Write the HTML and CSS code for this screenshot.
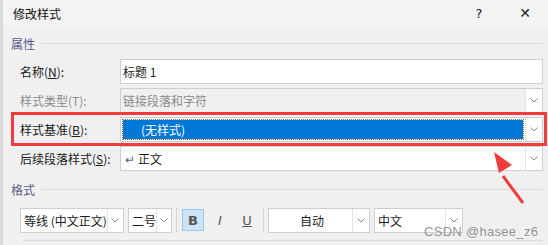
FILE: index.html
```html
<!DOCTYPE html>
<html lang="zh-CN">
<head>
    <meta charset="UTF-8">
    <title>修改样式</title>
    <link rel="stylesheet" href="styles.css">
</head>
<body>
    <div class="dialog">
        <div class="titlebar">
            <span class="title">修改样式</span>
            <span class="tb-btn">?</span>
            <span class="tb-btn close">✕</span>
        </div>

        <div class="content">
            <div class="group-header"><span>属性</span></div>

            <div class="form">
                <label>名称(<u>N</u>):</label>
                <div class="field text">标题 1</div>

                <label class="disabled">样式类型(T):</label>
                <div class="field select disabled">
                    <span class="value">链接段落和字符</span>
                    <span class="arrow"><svg viewBox="0 0 8 5"><path d="M0.5 0.5 L4 4 L7.5 0.5"/></svg></span>
                </div>

                <label>样式基准(<u>B</u>):</label>
                <div class="field select focused">
                    <span class="value"><span class="hl">(无样式)</span></span>
                    <span class="arrow"><svg viewBox="0 0 8 5"><path d="M0.5 0.5 L4 4 L7.5 0.5"/></svg></span>
                </div>

                <label>后续段落样式(<u>S</u>):</label>
                <div class="field select">
                    <span class="value"><span class="ret">↵</span> 正文</span>
                    <span class="arrow"><svg viewBox="0 0 8 5"><path d="M0.5 0.5 L4 4 L7.5 0.5"/></svg></span>
                </div>
            </div>

            <div class="group-header format"><span>格式</span></div>

            <div class="toolbar">
                <div class="combo font"><span class="value">等线 (中文正文)</span><span class="arrow"><svg viewBox="0 0 8 5"><path d="M0.5 0.5 L4 4 L7.5 0.5"/></svg></span></div>
                <div class="combo size"><span class="value">二号</span><span class="arrow"><svg viewBox="0 0 8 5"><path d="M0.5 0.5 L4 4 L7.5 0.5"/></svg></span></div>
                <div class="sep"></div>
                <div class="tbtn active"><b>B</b></div>
                <div class="tbtn"><i>I</i></div>
                <div class="tbtn"><u>U</u></div>
                <div class="sep"></div>
                <div class="combo color"><span class="value center">自动</span><span class="arrow"><svg viewBox="0 0 8 5"><path d="M0.5 0.5 L4 4 L7.5 0.5"/></svg></span></div>
                <div class="combo lang"><span class="value">中文</span><span class="arrow"><svg viewBox="0 0 8 5"><path d="M0.5 0.5 L4 4 L7.5 0.5"/></svg></span></div>
            </div>
            <div class="bottom-line"></div>
        </div>

        <!-- annotation drawn over the dialog -->
        <div class="mark-box"></div>
        <svg class="mark-arrow" viewBox="0 0 60 70">
            <path d="M33 51 L13 24" stroke="#f23c3c" stroke-width="3" fill="none"/>
            <path d="M4 0 L22 13 L9 21 Z" fill="#f23c3c"/>
        </svg>
        <div class="watermark">CSDN @hasee_z6</div>
    </div>
</body>
</html>
```

FILE: styles.css
```css
body {
    margin: 0;
    background: #f0f0f0;
    font-family: "Noto Sans CJK SC", "Microsoft YaHei", sans-serif;
    font-size: 12px;
    color: #1a1a1a;
}

.dialog {
    position: relative;
    width: 548px;
    height: 245px;
    overflow: hidden;
    border-left: 3px solid #dadada;
    box-sizing: border-box;
}

.titlebar {
    display: flex;
    align-items: center;
    height: 26px;
    background: #f3f3f3;
    padding-left: 10px;
}

.title {
    flex: 1;
    font-size: 12px;
    color: #111;
}

.tb-btn {
    width: 46px;
    text-align: center;
    font-family: "DejaVu Sans", sans-serif;
    font-size: 13px;
    color: #222;
}

.tb-btn.close {
    font-size: 14px;
}

.content {
    padding: 4px 5px 0 8px;
}

.group-header {
    display: flex;
    align-items: center;
    height: 26px;
    color: #5a5a8a;
}

.group-header::after {
    content: "";
    flex: 1;
    height: 1px;
    background: #dcdcdc;
    margin-left: 6px;
}

.group-header.format {
    margin-top: 5px;
}

.form {
    display: grid;
    grid-template-columns: 109px 1fr;
    grid-auto-rows: 25px;
    row-gap: 4px;
    align-items: center;
    margin-top: 3px;
}

.form label {
    padding-left: 9px;
    color: #1a1a1a;
}

.form label.disabled {
    color: #8a8a8a;
}

.field {
    display: flex;
    align-items: stretch;
    height: 25px;
    box-sizing: border-box;
    border: 1px solid #cfcfcf;
    background: #fff;
}

.field.text {
    align-items: center;
    padding-left: 2px;
}

.field .value {
    flex: 1;
    display: flex;
    align-items: center;
    padding-left: 2px;
}

.field.disabled {
    background: #f0f0f0;
    color: #8a8a8a;
}

.field.focused .value {
    padding: 2px;
}

.field .hl {
    flex: 1;
    align-self: stretch;
    display: flex;
    align-items: center;
    background: #0078d7;
    color: #fff;
    padding-left: 18px;
    outline: 1px dotted #8a6a40;
}

.ret {
    color: #666;
    margin: 0 3px 0 2px;
}

.arrow {
    width: 16px;
    display: flex;
    align-items: center;
    justify-content: center;
    border-left: 1px solid #e3e3e3;
    background: #fff;
}

.arrow svg {
    width: 8px;
    height: 5px;
    fill: none;
    stroke: #8a8a8a;
    stroke-width: 1;
}

.toolbar {
    display: flex;
    align-items: center;
    height: 26px;
    margin-top: 5px;
    padding-left: 9px;
}

.combo {
    display: flex;
    height: 25px;
    box-sizing: border-box;
    border: 1px solid #cfcfcf;
    background: #fff;
    margin-right: 4px;
}

.combo .value {
    display: flex;
    align-items: center;
    padding-left: 3px;
    flex: 1;
    white-space: nowrap;
}

.combo .value.center {
    justify-content: center;
}

.combo.font { width: 104px; }
.combo.size { width: 44px; }
.combo.color { width: 102px; }
.combo.lang { width: 89px; }

.sep {
    width: 1px;
    height: 26px;
    background: #d4d4d4;
    margin-right: 4px;
}

.tbtn {
    width: 22px;
    height: 22px;
    margin-right: 5px;
    display: flex;
    align-items: center;
    justify-content: center;
    box-sizing: border-box;
    font-family: "DejaVu Sans", sans-serif;
    font-size: 13px;
    color: #555;
}

.tbtn b {
    font-weight: bold;
}

.tbtn.active {
    background: #cce4f7;
    border: 1px solid #99c9ef;
    margin-left: 1px;
}

.bottom-line {
    height: 1px;
    background: #dcdcdc;
    margin: 7px 0 0 12px;
}

.mark-box {
    position: absolute;
    left: 8px;
    top: 112px;
    width: 536px;
    height: 34px;
    box-sizing: border-box;
    border: 3px solid #f23c3c;
}

.mark-arrow {
    position: absolute;
    left: 487px;
    top: 152px;
    width: 60px;
    height: 70px;
}

.watermark {
    position: absolute;
    left: 421px;
    top: 224px;
    font-family: "Liberation Sans", sans-serif;
    font-size: 13px;
    color: rgba(120, 120, 120, 0.8);
    letter-spacing: 0.3px;
}
```
